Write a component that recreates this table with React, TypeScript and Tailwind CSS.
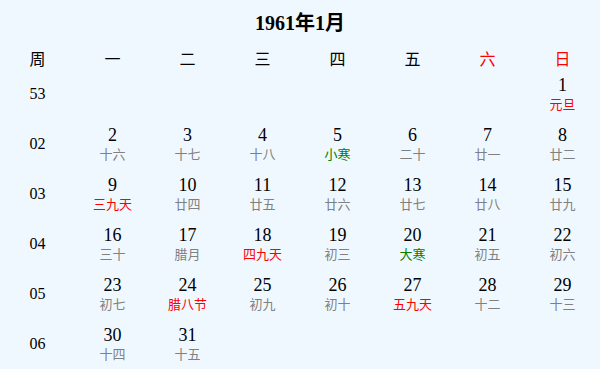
import React from "react";

type Day = {
  d: number;
  l: string;
  tone?: "red" | "green";
};

const headers = ["一", "二", "三", "四", "五", "六", "日"];

// weeks of January 1961, Monday first; null = empty cell
const weeks: { no: string; days: (Day | null)[] }[] = [
  { no: "53", days: [null, null, null, null, null, null, { d: 1, l: "元旦", tone: "red" }] },
  {
    no: "02",
    days: [
      { d: 2, l: "十六" },
      { d: 3, l: "十七" },
      { d: 4, l: "十八" },
      { d: 5, l: "小寒", tone: "green" },
      { d: 6, l: "二十" },
      { d: 7, l: "廿一" },
      { d: 8, l: "廿二" },
    ],
  },
  {
    no: "03",
    days: [
      { d: 9, l: "三九天", tone: "red" },
      { d: 10, l: "廿四" },
      { d: 11, l: "廿五" },
      { d: 12, l: "廿六" },
      { d: 13, l: "廿七" },
      { d: 14, l: "廿八" },
      { d: 15, l: "廿九" },
    ],
  },
  {
    no: "04",
    days: [
      { d: 16, l: "三十" },
      { d: 17, l: "腊月" },
      { d: 18, l: "四九天", tone: "red" },
      { d: 19, l: "初三" },
      { d: 20, l: "大寒", tone: "green" },
      { d: 21, l: "初五" },
      { d: 22, l: "初六" },
    ],
  },
  {
    no: "05",
    days: [
      { d: 23, l: "初七" },
      { d: 24, l: "腊八节", tone: "red" },
      { d: 25, l: "初九" },
      { d: 26, l: "初十" },
      { d: 27, l: "五九天", tone: "red" },
      { d: 28, l: "十二" },
      { d: 29, l: "十三" },
    ],
  },
  {
    no: "06",
    days: [{ d: 30, l: "十四" }, { d: 31, l: "十五" }, null, null, null, null, null],
  },
];

const serif = "font-['Liberation_Serif','Noto_Sans_CJK_SC',serif]";
const cjk = "font-['Noto_Sans_CJK_SC',sans-serif]";

function toneClass(tone?: Day["tone"]) {
  if (tone === "red") return "text-[#ff0000]";
  if (tone === "green") return "text-[#008000]";
  return "text-[#808080]";
}

export default function App() {
  return (
    <div className={`w-[600px] h-[369px] bg-[#f0f8ff] text-black overflow-hidden ${serif}`}>
      {/* TITLE */}
      <div className="h-[46px] flex items-center justify-center text-[20px] font-bold">
        1961年1月
      </div>

      {/* HEADER */}
      <div className={`grid grid-cols-8 h-[23px] items-center text-center text-[16px] ${cjk}`}>
        <div>周</div>
        {headers.map((h, i) => (
          <div key={h} className={i >= 5 ? "text-[#ff0000]" : ""}>
            {h}
          </div>
        ))}
      </div>

      {/* WEEKS */}
      {weeks.map((w) => (
        <div key={w.no} className="grid grid-cols-8 h-[50px] items-center text-center">
          <div className="text-[16px]">{w.no}</div>
          {w.days.map((day, i) =>
            day ? (
              <div key={i} className="flex flex-col items-center">
                <span className="text-[18px] leading-[20px]">{day.d}</span>
                <span className={`text-[13px] leading-[18px] ${cjk} ${toneClass(day.tone)}`}>
                  {day.l}
                </span>
              </div>
            ) : (
              <div key={i} />
            )
          )}
        </div>
      ))}
    </div>
  );
}
